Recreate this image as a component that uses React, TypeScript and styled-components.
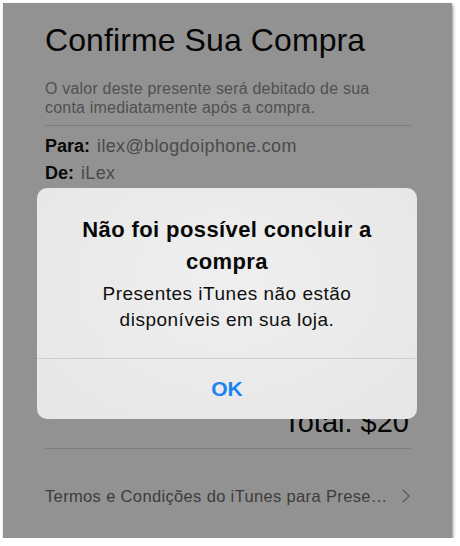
import React from "react";
import styled, { createGlobalStyle } from "styled-components";

const Global = createGlobalStyle`
  html, body {
    margin: 0;
    padding: 0;
    background: #ffffff;
  }
  body {
    font-family: "Liberation Sans", Arial, sans-serif;
  }
`;

const Screen = styled.div`
  position: relative;
  margin: 3px 0 0 3px;
  width: 449px;
  height: 535px;
  background: #929292;
  box-shadow: 1px 2px 3px rgba(0, 0, 0, 0.45);
  box-sizing: border-box;
  padding: 18px 41px 0 42px;
  display: flex;
  flex-direction: column;
  overflow: hidden;
`;

const Title = styled.h1`
  margin: 0;
  font-size: 32px;
  line-height: 38px;
  font-weight: 400;
  color: #050505;
  letter-spacing: 0.1px;
`;

const Note = styled.p`
  margin: 20px 0 0;
  font-size: 16px;
  line-height: 19px;
  letter-spacing: 0.2px;
  color: #505050;
`;

const Rule = styled.div<{ $gap?: number }>`
  height: 1px;
  background: #7c7c7c;
  margin-top: ${(p) => p.$gap ?? 0}px;
`;

const Field = styled.div`
  font-size: 18px;
  line-height: 27px;
  letter-spacing: 0.35px;
  color: #4a4a4a;
  b {
    color: #080808;
    font-weight: 700;
    margin-right: 7px;
    letter-spacing: 0;
  }
`;

const Fields = styled.div`
  margin-top: 7px;
`;

const Spacer = styled.div`
  flex: 1;
`;

const Total = styled.div`
  text-align: right;
  font-size: 29px;
  line-height: 32px;
  color: #050505;
  padding-right: 2px;
`;

const Terms = styled.div`
  display: flex;
  align-items: center;
  justify-content: space-between;
  margin: 37px 0 32px;
  font-size: 16.5px;
  line-height: 20px;
  letter-spacing: 0.35px;
  color: #3c3c3c;
`;

const Chevron = styled.svg`
  width: 8px;
  height: 14px;
  margin-right: 1px;
`;

const Alert = styled.div`
  position: absolute;
  left: 34px;
  top: 185px;
  width: 380px;
  height: 231px;
  border-radius: 10px;
  background: radial-gradient(ellipse at 50% 40%, #efefef 0%, #e6e6e6 100%);
  display: flex;
  flex-direction: column;
  text-align: center;
`;

const AlertBody = styled.div`
  flex: 1;
  padding: 26px 10px 0;
`;

const AlertTitle = styled.div`
  font-size: 22px;
  line-height: 32px;
  font-weight: 700;
  letter-spacing: 0.4px;
  color: #080808;
`;

const AlertText = styled.div`
  margin-top: 3px;
  font-size: 19px;
  line-height: 26px;
  letter-spacing: 0.5px;
  color: #101010;
`;

const AlertButton = styled.div`
  height: 60px;
  border-top: 1px solid #cfcfcf;
  display: flex;
  align-items: center;
  justify-content: center;
  font-size: 21px;
  font-weight: 700;
  color: #1b84f2;
`;

export default function App() {
  return (
    <>
      <Global />
      <Screen>
        <Title>Confirme Sua Compra</Title>
        <Note>
          O valor deste presente será debitado de sua
          <br />
          conta imediatamente após a compra.
        </Note>
        <Rule $gap={8} />
        <Fields>
          <Field>
            <b>Para:</b>ilex@blogdoiphone.com
          </Field>
          <Field>
            <b>De:</b>iLex
          </Field>
        </Fields>
        <Spacer />
        <Total>Total: $20</Total>
        <Rule $gap={10} />
        <Terms>
          <span>Termos e Condições do iTunes para Prese…</span>
          <Chevron viewBox="0 0 8 14">
            <path d="M1 1l6 6-6 6" fill="none" stroke="#5a5a5a" strokeWidth="1.3" />
          </Chevron>
        </Terms>
        <Alert>
          <AlertBody>
            <AlertTitle>
              Não foi possível concluir a
              <br />
              compra
            </AlertTitle>
            <AlertText>
              Presentes iTunes não estão
              <br />
              disponíveis em sua loja.
            </AlertText>
          </AlertBody>
          <AlertButton>OK</AlertButton>
        </Alert>
      </Screen>
    </>
  );
}
